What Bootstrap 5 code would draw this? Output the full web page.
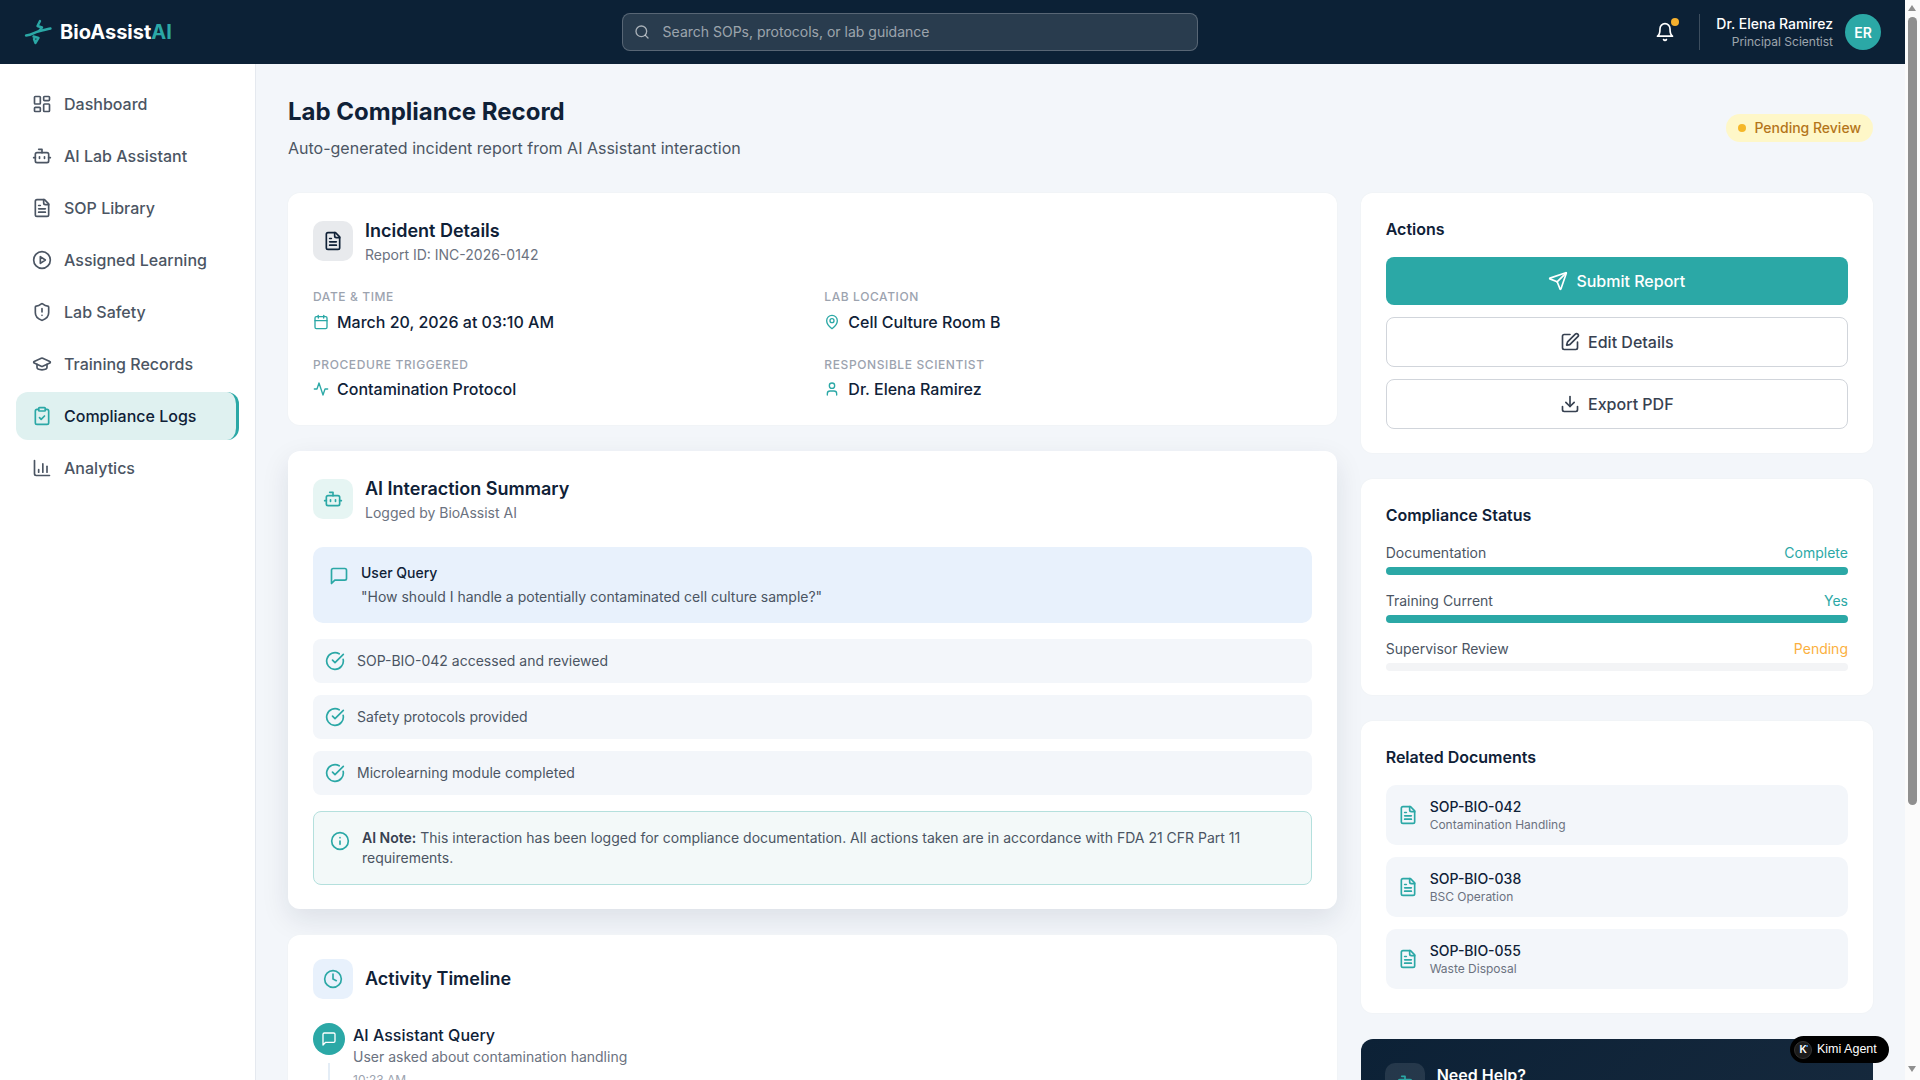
<!DOCTYPE html>
<html lang="en">
<head>
    <meta charset="UTF-8">
    <meta name="viewport" content="width=device-width, initial-scale=1.0">
    <title>BioAssist AI - Lab Compliance Record</title>
    <link href="https://cdn.jsdelivr.net/npm/bootstrap@5.3.0/dist/css/bootstrap.min.css" rel="stylesheet">
    <style>
        body {
            font-family: Inter, "Liberation Sans", sans-serif;
            background: #f3f6fa;
            color: #0f2137;
            padding-right: 15px;
        }
        svg.ic {
            fill: none;
            stroke: currentColor;
            stroke-width: 2;
            stroke-linecap: round;
            stroke-linejoin: round;
            flex-shrink: 0;
        }
        .ic-16 { width: 16px; height: 16px; }
        .ic-20 { width: 20px; height: 20px; }
        .teal { color: #2ba8a6; }

        /* the browser hides its own scrollbar here, so it is drawn */
        .scroll-rail {
            position: fixed;
            top: 0;
            right: 0;
            bottom: 0;
            width: 15px;
            background: #fbfbfb;
            z-index: 1050;
            padding: 5px 3px;
        }
        .scroll-up, .scroll-down {
            width: 0;
            height: 0;
            border-left: 4.5px solid transparent;
            border-right: 4.5px solid transparent;
        }
        .scroll-up { border-bottom: 6px solid #8f8f8f; margin-bottom: 6px; }
        .scroll-down { border-top: 6px solid #8f8f8f; margin-top: auto; margin-bottom: 3px; }
        .scroll-thumb { height: 788px; background: #8f8f8f; border-radius: 5px; }

        .topbar {
            height: 64px;
            background: #0c2136;
            padding: 0 24px;
        }
        .brand { font-size: 20px; font-weight: 700; color: #fff; }
        .brand span { color: #2ba8a6; }
        .search-box {
            width: 576px;
            height: 38px;
            background: rgba(255,255,255,.12);
            border: 1px solid rgba(255,255,255,.22);
            border-radius: 8px;
            padding: 0 11px;
            gap: 13px;
            color: rgba(255,255,255,.6);
        }
        .search-box input {
            background: none;
            border: 0;
            outline: 0;
            padding: 0;
            width: 100%;
            font-size: 14px;
            line-height: 20px;
            color: #fff;
        }
        .search-box input::placeholder { color: rgba(255,255,255,.55); }
        .bell-btn { width: 36px; height: 36px; color: #fff; }
        .bell-dot {
            top: 4px;
            right: 4px;
            width: 8px;
            height: 8px;
            background: #f5b02e;
        }
        .top-divider { width: 1px; height: 36px; background: rgba(255,255,255,.2); }
        .user-name { font-size: 14px; font-weight: 500; color: #fff; line-height: 20px; }
        .user-role { font-size: 12px; color: rgba(255,255,255,.6); line-height: 16px; }
        .avatar {
            width: 36px;
            height: 36px;
            background: #2ba8a6;
            color: #fff;
            font-size: 14px;
            font-weight: 600;
        }

        .sidebar {
            width: 256px;
            height: calc(100vh - 64px);
            top: 64px;
            background: #fff;
            border-right: 1px solid #e5e9ef;
            padding: 16px;
        }
        .sidebar .nav { gap: 4px; }
        .sidebar .nav-link {
            height: 48px;
            padding: 0 16px;
            gap: 12px;
            border-radius: 12px;
            color: #4b5563;
            font-weight: 500;
            font-size: 16px;
        }
        .sidebar .nav-link.active {
            background: #dff1f0;
            color: #0f2137;
            border-right: 3px solid #2ba8a6;
        }
        .sidebar .nav-link.active svg { color: #2ba8a6; }

        .page { padding: 32px; min-width: 0; }
        .page-title { font-size: 24px; line-height: 32px; font-weight: 700; margin: 0 0 8px; }
        .page-sub { font-size: 16px; line-height: 24px; color: #4b5563; margin: 0; }
        .page-head { margin-bottom: 33px; }
        .pending-badge {
            height: 28px;
            padding: 0 12px 1px;
            gap: 8px;
            background: #fef7c8;
            color: #b4751a;
            font-size: 14px;
            font-weight: 500;
        }
        .pending-badge i { width: 8px; height: 8px; border-radius: 50%; background: #f5b728; }

        .stack { display: flex; flex-direction: column; gap: 26px; }
        .panel {
            border-radius: 12px;
            background: #fff;
            padding: 24px 25px;
            box-shadow: 0 0 0 1px #f1f4f7;
        }
        .panel-raised { box-shadow: 0 10px 28px rgba(15,33,55,.1); }
        .panel-dark {
            border-radius: 12px;
            padding: 24px;
            background: linear-gradient(135deg, #0c2136, #16293d);
            color: #fff;
        }
        .icon-box {
            width: 40px;
            height: 40px;
            border-radius: 10px;
            flex-shrink: 0;
        }
        .box-gray { background: #e8eaed; color: #0f2137; }
        .box-teal { background: #e6f5f3; color: #2ba8a6; }
        .box-blue { background: #e8f1fc; color: #2ba8a6; }
        .box-dark { background: rgba(255,255,255,.1); color: #2ba8a6; }
        .card-title-lg { font-size: 18px; line-height: 27px; font-weight: 600; margin: 0; }
        .card-sub { font-size: 14px; line-height: 21px; color: #6b7280; margin: 0; }
        .card-title-sm { font-size: 16px; line-height: 24px; font-weight: 600; margin: 0 0 16px; }
        .timeline-title { padding-bottom: 2px; }

        .detail-grid {
            display: grid;
            grid-template-columns: 1fr 1fr;
            gap: 22px 24px;
            margin-top: 23px;
        }
        .detail-label {
            font-size: 12px;
            line-height: 18px;
            font-weight: 500;
            color: #9ca3af;
            text-transform: uppercase;
            letter-spacing: .05em;
            margin-bottom: 3.5px;
        }
        .detail-value { font-size: 16px; line-height: 24px; font-weight: 500; gap: 8px; }

        .query-box {
            background: #e8f1fc;
            border-radius: 10px;
            padding: 15px 16px 16px;
            gap: 12px;
            margin: 24px 0 16px;
            font-size: 14px;
            line-height: 21px;
        }
        .query-box svg { margin-top: 4px; }
        .query-box b { font-weight: 500; display: block; margin-bottom: 3px; }
        .query-box span { color: #4b5563; }
        .check-list { display: flex; flex-direction: column; gap: 12px; }
        .check-row {
            height: 44px;
            background: #f3f6fa;
            border-radius: 8px;
            padding: 0 12px 2px;
            gap: 12px;
            font-size: 14px;
            color: #4b5563;
        }
        .check-row svg { margin-top: 2px; }
        .note-box {
            background: #f3f9f9;
            border: 1px solid #b4e0dd;
            border-radius: 8px;
            padding: 16px;
            gap: 12px;
            margin-top: 16px;
            font-size: 14px;
            line-height: 20px;
            color: #4b5563;
        }
        .note-box svg { margin-top: 3px; }
        .note-box b { font-weight: 600; color: #374151; }

        .tl-item { gap: 8px; padding-bottom: 24px; position: relative; }
        .tl-item:last-child { padding-bottom: 0; }
        .tl-item:not(:last-child)::before {
            content: "";
            position: absolute;
            left: 15px;
            top: 40px;
            bottom: 0;
            width: 2px;
            background: #e4edf6;
        }
        .tl-dot {
            width: 32px;
            height: 32px;
            background: #2ba8a6;
            color: #fff;
            flex-shrink: 0;
        }
        .tl-title { font-size: 16px; line-height: 24px; font-weight: 500; }
        .tl-sub { font-size: 14px; line-height: 20px; color: #6b7280; }
        .tl-time { font-size: 12px; line-height: 18px; color: #9ca3af; margin-top: 4px; }

        .action-list { display: flex; flex-direction: column; gap: 12px; }
        .action-btn {
            height: 50px;
            border: 1px solid #d1d5db;
            border-radius: 8px;
            background: #fff;
            color: #374151;
            font-size: 16px;
            font-weight: 500;
            gap: 8px;
        }
        .action-primary {
            height: 48px;
            border: 0;
            background: #2ba8a6;
            color: #fff;
        }

        .status-list { display: flex; flex-direction: column; gap: 16px; }
        .status-row { font-size: 14px; line-height: 20px; color: #4b5563; margin-bottom: 4px; }
        .status-pending { color: #fbb040; }
        .progress { height: 8px; background: #f3f4f6; border-radius: 4px; }
        .progress-bar { background: #2ba8a6; }

        .doc-list { display: flex; flex-direction: column; gap: 12px; }
        .doc-row {
            height: 60px;
            background: #f3f6fa;
            border-radius: 10px;
            padding: 0 12px;
            gap: 12px;
        }
        .doc-id { font-size: 14px; line-height: 20px; font-weight: 500; }
        .doc-name { font-size: 12px; line-height: 16px; color: #6b7280; }

        .kimi-pill {
            position: fixed;
            right: 31px;
            bottom: 17px;
            width: 99px;
            height: 27px;
            padding: 0 4px;
            gap: 5px;
            background: #000;
            color: #fff;
            font-family: "Liberation Sans", Arial, sans-serif;
            font-size: 12.5px;
            z-index: 1040;
        }
        .kimi-logo {
            width: 18px;
            height: 18px;
            background: #1c1c1c;
            border: 1px solid #333;
            font-size: 10px;
            font-weight: 700;
        }
        .kimi-logo::after {
            content: "";
            position: absolute;
            top: 3px;
            right: 3px;
            width: 2px;
            height: 2px;
            border-radius: 50%;
            background: #3b9dff;
        }
    </style>
</head>
<body>
    <svg width="0" height="0" class="position-absolute">
        <symbol id="i-dashboard" viewBox="0 0 24 24"><rect x="3" y="3" width="7" height="9" rx="1"/><rect x="14" y="3" width="7" height="5" rx="1"/><rect x="14" y="12" width="7" height="9" rx="1"/><rect x="3" y="16" width="7" height="5" rx="1"/></symbol>
        <symbol id="i-bot" viewBox="0 0 24 24"><path d="M12 8V4H8"/><rect x="4" y="8" width="16" height="12" rx="2"/><path d="M2 14h2"/><path d="M20 14h2"/><path d="M15 13v2"/><path d="M9 13v2"/></symbol>
        <symbol id="i-file" viewBox="0 0 24 24"><path d="M15 2H6a2 2 0 0 0-2 2v16a2 2 0 0 0 2 2h12a2 2 0 0 0 2-2V7Z"/><path d="M14 2v4a2 2 0 0 0 2 2h4"/><path d="M10 9H8"/><path d="M16 13H8"/><path d="M16 17H8"/></symbol>
        <symbol id="i-play" viewBox="0 0 24 24"><circle cx="12" cy="12" r="10"/><polygon points="10 8 16 12 10 16 10 8"/></symbol>
        <symbol id="i-shield" viewBox="0 0 24 24"><path d="M20 13c0 5-3.5 7.5-7.66 8.95a1 1 0 0 1-.67-.01C7.5 20.5 4 18 4 13V6a1 1 0 0 1 1-1c2 0 4.5-1.2 6.24-2.72a1.17 1.17 0 0 1 1.52 0C14.51 3.81 17 5 19 5a1 1 0 0 1 1 1z"/><path d="M12 8v4"/><path d="M12 16h.01"/></symbol>
        <symbol id="i-cap" viewBox="0 0 24 24"><path d="M21.42 10.922a1 1 0 0 0-.019-1.838L12.83 5.18a2 2 0 0 0-1.66 0L2.6 9.08a1 1 0 0 0 0 1.832l8.57 3.908a2 2 0 0 0 1.66 0z"/><path d="M6 12.5V16a6 3 0 0 0 12 0v-3.5"/></symbol>
        <symbol id="i-clipboard" viewBox="0 0 24 24"><rect x="8" y="2" width="8" height="4" rx="1"/><path d="M16 4h2a2 2 0 0 1 2 2v14a2 2 0 0 1-2 2H6a2 2 0 0 1-2-2V6a2 2 0 0 1 2-2h2"/><path d="m9 14 2 2 4-4"/></symbol>
        <symbol id="i-chart" viewBox="0 0 24 24"><path d="M3 3v16a2 2 0 0 0 2 2h16"/><path d="M8 17v-3"/><path d="M13 17V7"/><path d="M18 17V10"/></symbol>
        <symbol id="i-search" viewBox="0 0 24 24"><circle cx="11" cy="11" r="8"/><path d="m21 21-4.3-4.3"/></symbol>
        <symbol id="i-bell" viewBox="0 0 24 24"><path d="M6 8a6 6 0 0 1 12 0c0 7 3 9 3 9H3s3-2 3-9"/><path d="M10.3 21a1.94 1.94 0 0 0 3.4 0"/></symbol>
        <symbol id="i-calendar" viewBox="0 0 24 24"><path d="M8 2v4"/><path d="M16 2v4"/><rect x="3" y="4" width="18" height="18" rx="2"/><path d="M3 10h18"/></symbol>
        <symbol id="i-pin" viewBox="0 0 24 24"><path d="M20 10c0 6-8 12-8 12s-8-6-8-12a8 8 0 0 1 16 0Z"/><circle cx="12" cy="10" r="3"/></symbol>
        <symbol id="i-activity" viewBox="0 0 24 24"><path d="M22 12h-4l-3 9L9 3l-3 9H2"/></symbol>
        <symbol id="i-user" viewBox="0 0 24 24"><path d="M19 21v-2a4 4 0 0 0-4-4H9a4 4 0 0 0-4 4v2"/><circle cx="12" cy="7" r="4"/></symbol>
        <symbol id="i-message" viewBox="0 0 24 24"><path d="M21 15a2 2 0 0 1-2 2H7l-4 4V5a2 2 0 0 1 2-2h14a2 2 0 0 1 2 2z"/></symbol>
        <symbol id="i-check" viewBox="0 0 24 24"><path d="M21.801 10A10 10 0 1 1 17 3.335"/><path d="m9 11 3 3L22 4"/></symbol>
        <symbol id="i-info" viewBox="0 0 24 24"><circle cx="12" cy="12" r="10"/><path d="M12 16v-4"/><path d="M12 8h.01"/></symbol>
        <symbol id="i-clock" viewBox="0 0 24 24"><circle cx="12" cy="12" r="10"/><polyline points="12 6 12 12 16 14"/></symbol>
        <symbol id="i-send" viewBox="0 0 24 24"><path d="M14.536 21.686a.5.5 0 0 0 .937-.024l6.5-19a.496.496 0 0 0-.635-.635l-19 6.5a.5.5 0 0 0-.024.937l7.93 3.18a2 2 0 0 1 1.112 1.11z"/><path d="m21.854 2.147-10.94 10.939"/></symbol>
        <symbol id="i-edit" viewBox="0 0 24 24"><path d="M12 3H5a2 2 0 0 0-2 2v14a2 2 0 0 0 2 2h14a2 2 0 0 0 2-2v-7"/><path d="M18.375 2.625a1 1 0 0 1 3 3l-9.013 9.014a2 2 0 0 1-.853.505l-2.873.84a.5.5 0 0 1-.62-.62l.84-2.873a2 2 0 0 1 .506-.852z"/></symbol>
        <symbol id="i-download" viewBox="0 0 24 24"><path d="M21 15v4a2 2 0 0 1-2 2H5a2 2 0 0 1-2-2v-4"/><polyline points="7 10 12 15 17 10"/><path d="M12 15V3"/></symbol>
    </svg>

    <header class="topbar sticky-top d-flex align-items-center justify-content-between">
        <div class="d-flex align-items-center gap-2">
            <svg width="28" height="26" viewBox="0 0 28 26" fill="none" stroke="#2ba8a6" stroke-linecap="round" stroke-linejoin="round">
                <path d="M2 16.500C8 16 10 13.500 14 12.500S22 10.500 26.500 9.500" stroke-width="2.400"/>
                <path d="M16 2 13.500 7 18 8.500 15 12" stroke-width="2.400"/>
                <path d="M9.500 17.500 14.500 19 11.500 24 10 20" stroke-width="2.400"/>
            </svg>
            <div class="brand">BioAssist<span>AI</span></div>
        </div>
        <div class="search-box d-flex align-items-center">
            <svg class="ic ic-16"><use href="#i-search"/></svg>
            <input type="text" placeholder="Search SOPs, protocols, or lab guidance">
        </div>
        <div class="d-flex align-items-center">
            <div class="bell-btn position-relative d-flex align-items-center justify-content-center">
                <svg class="ic ic-20"><use href="#i-bell"/></svg>
                <span class="bell-dot position-absolute rounded-circle"></span>
            </div>
            <div class="top-divider mx-3"></div>
            <div class="text-end me-2 pe-1">
                <div class="user-name">Dr. Elena Ramirez</div>
                <div class="user-role">Principal Scientist</div>
            </div>
            <div class="avatar rounded-circle d-flex align-items-center justify-content-center">ER</div>
        </div>
    </header>

    <div class="d-flex align-items-start">
        <aside class="sidebar sticky-top flex-shrink-0">
            <nav class="nav flex-column">
                <a class="nav-link d-flex align-items-center" href="#"><svg class="ic ic-20"><use href="#i-dashboard"/></svg>Dashboard</a>
                <a class="nav-link d-flex align-items-center" href="#"><svg class="ic ic-20"><use href="#i-bot"/></svg>AI Lab Assistant</a>
                <a class="nav-link d-flex align-items-center" href="#"><svg class="ic ic-20"><use href="#i-file"/></svg>SOP Library</a>
                <a class="nav-link d-flex align-items-center" href="#"><svg class="ic ic-20"><use href="#i-play"/></svg>Assigned Learning</a>
                <a class="nav-link d-flex align-items-center" href="#"><svg class="ic ic-20"><use href="#i-shield"/></svg>Lab Safety</a>
                <a class="nav-link d-flex align-items-center" href="#"><svg class="ic ic-20"><use href="#i-cap"/></svg>Training Records</a>
                <a class="nav-link active d-flex align-items-center" href="#"><svg class="ic ic-20"><use href="#i-clipboard"/></svg>Compliance Logs</a>
                <a class="nav-link d-flex align-items-center" href="#"><svg class="ic ic-20"><use href="#i-chart"/></svg>Analytics</a>
            </nav>
        </aside>

        <main class="page flex-grow-1">
            <div class="page-head d-flex justify-content-between align-items-center">
                <div>
                    <h1 class="page-title">Lab Compliance Record</h1>
                    <p class="page-sub">Auto-generated incident report from AI Assistant interaction</p>
                </div>
                <div class="pending-badge rounded-pill d-flex align-items-center"><i></i>Pending Review</div>
            </div>

            <div class="row g-4">
                <div class="col-8">
                    <div class="stack">
                        <section class="panel">
                            <div class="d-flex align-items-center gap-2">
                                <div class="icon-box box-gray d-flex align-items-center justify-content-center me-1"><svg class="ic ic-20"><use href="#i-file"/></svg></div>
                                <div>
                                    <h2 class="card-title-lg">Incident Details</h2>
                                    <p class="card-sub">Report ID: INC-2026-0142</p>
                                </div>
                            </div>
                            <div class="detail-grid">
                                <div>
                                    <div class="detail-label">Date &amp; Time</div>
                                    <div class="detail-value d-flex align-items-center"><svg class="ic ic-16 teal"><use href="#i-calendar"/></svg>March 20, 2026 at 03:10 AM</div>
                                </div>
                                <div>
                                    <div class="detail-label">Lab Location</div>
                                    <div class="detail-value d-flex align-items-center"><svg class="ic ic-16 teal"><use href="#i-pin"/></svg>Cell Culture Room B</div>
                                </div>
                                <div>
                                    <div class="detail-label">Procedure Triggered</div>
                                    <div class="detail-value d-flex align-items-center"><svg class="ic ic-16 teal"><use href="#i-activity"/></svg>Contamination Protocol</div>
                                </div>
                                <div>
                                    <div class="detail-label">Responsible Scientist</div>
                                    <div class="detail-value d-flex align-items-center"><svg class="ic ic-16 teal"><use href="#i-user"/></svg>Dr. Elena Ramirez</div>
                                </div>
                            </div>
                        </section>

                        <section class="panel panel-raised">
                            <div class="d-flex align-items-center gap-2">
                                <div class="icon-box box-teal d-flex align-items-center justify-content-center me-1"><svg class="ic ic-20"><use href="#i-bot"/></svg></div>
                                <div>
                                    <h2 class="card-title-lg">AI Interaction Summary</h2>
                                    <p class="card-sub">Logged by BioAssist AI</p>
                                </div>
                            </div>
                            <div class="query-box d-flex">
                                <svg class="ic ic-20 teal"><use href="#i-message"/></svg>
                                <div>
                                    <b>User Query</b>
                                    <span>"How should I handle a potentially contaminated cell culture sample?"</span>
                                </div>
                            </div>
                            <div class="check-list">
                                <div class="check-row d-flex align-items-center"><svg class="ic ic-20 teal"><use href="#i-check"/></svg>SOP-BIO-042 accessed and reviewed</div>
                                <div class="check-row d-flex align-items-center"><svg class="ic ic-20 teal"><use href="#i-check"/></svg>Safety protocols provided</div>
                                <div class="check-row d-flex align-items-center"><svg class="ic ic-20 teal"><use href="#i-check"/></svg>Microlearning module completed</div>
                            </div>
                            <div class="note-box d-flex">
                                <svg class="ic ic-20 teal"><use href="#i-info"/></svg>
                                <div><b>AI Note:</b> This interaction has been logged for compliance documentation. All actions taken are in accordance with FDA 21 CFR Part 11 requirements.</div>
                            </div>
                        </section>

                        <section class="panel">
                            <div class="d-flex align-items-center gap-2 mb-4">
                                <div class="icon-box box-blue d-flex align-items-center justify-content-center me-1"><svg class="ic ic-20"><use href="#i-clock"/></svg></div>
                                <h2 class="card-title-lg timeline-title">Activity Timeline</h2>
                            </div>
                            <div class="tl-item d-flex">
                                <div class="tl-dot rounded-circle d-flex align-items-center justify-content-center"><svg class="ic ic-16"><use href="#i-message"/></svg></div>
                                <div>
                                    <div class="tl-title">AI Assistant Query</div>
                                    <div class="tl-sub">User asked about contamination handling</div>
                                    <div class="tl-time">10:23 AM</div>
                                </div>
                            </div>
                            <div class="tl-item d-flex">
                                <div class="tl-dot rounded-circle d-flex align-items-center justify-content-center"><svg class="ic ic-16"><use href="#i-file"/></svg></div>
                                <div>
                                    <div class="tl-title">SOP Accessed</div>
                                    <div class="tl-sub">SOP-BIO-042 opened and reviewed</div>
                                    <div class="tl-time">10:24 AM</div>
                                </div>
                            </div>
                            <div class="tl-item d-flex">
                                <div class="tl-dot rounded-circle d-flex align-items-center justify-content-center"><svg class="ic ic-16"><use href="#i-play"/></svg></div>
                                <div>
                                    <div class="tl-title">Microlearning Completed</div>
                                    <div class="tl-sub">Contamination response module finished</div>
                                    <div class="tl-time">10:31 AM</div>
                                </div>
                            </div>
                            <div class="tl-item d-flex">
                                <div class="tl-dot rounded-circle d-flex align-items-center justify-content-center"><svg class="ic ic-16"><use href="#i-clipboard"/></svg></div>
                                <div>
                                    <div class="tl-title">Report Generated</div>
                                    <div class="tl-sub">Compliance record created automatically</div>
                                    <div class="tl-time">10:32 AM</div>
                                </div>
                            </div>
                        </section>
                    </div>
                </div>

                <div class="col-4">
                    <div class="stack">
                        <section class="panel">
                            <h3 class="card-title-sm">Actions</h3>
                            <div class="action-list">
                                <button class="btn action-btn action-primary d-flex align-items-center justify-content-center"><svg class="ic ic-20"><use href="#i-send"/></svg>Submit Report</button>
                                <button class="btn action-btn d-flex align-items-center justify-content-center"><svg class="ic ic-20"><use href="#i-edit"/></svg>Edit Details</button>
                                <button class="btn action-btn d-flex align-items-center justify-content-center"><svg class="ic ic-20"><use href="#i-download"/></svg>Export PDF</button>
                            </div>
                        </section>

                        <section class="panel">
                            <h3 class="card-title-sm">Compliance Status</h3>
                            <div class="status-list">
                                <div>
                                    <div class="status-row d-flex justify-content-between"><span>Documentation</span><span class="teal">Complete</span></div>
                                    <div class="progress"><div class="progress-bar" style="width:100%"></div></div>
                                </div>
                                <div>
                                    <div class="status-row d-flex justify-content-between"><span>Training Current</span><span class="teal">Yes</span></div>
                                    <div class="progress"><div class="progress-bar" style="width:100%"></div></div>
                                </div>
                                <div>
                                    <div class="status-row d-flex justify-content-between"><span>Supervisor Review</span><span class="status-pending">Pending</span></div>
                                    <div class="progress"><div class="progress-bar" style="width:0%"></div></div>
                                </div>
                            </div>
                        </section>

                        <section class="panel">
                            <h3 class="card-title-sm">Related Documents</h3>
                            <div class="doc-list">
                                <div class="doc-row d-flex align-items-center">
                                    <svg class="ic ic-20 teal"><use href="#i-file"/></svg>
                                    <div><div class="doc-id">SOP-BIO-042</div><div class="doc-name">Contamination Handling</div></div>
                                </div>
                                <div class="doc-row d-flex align-items-center">
                                    <svg class="ic ic-20 teal"><use href="#i-file"/></svg>
                                    <div><div class="doc-id">SOP-BIO-038</div><div class="doc-name">BSC Operation</div></div>
                                </div>
                                <div class="doc-row d-flex align-items-center">
                                    <svg class="ic ic-20 teal"><use href="#i-file"/></svg>
                                    <div><div class="doc-id">SOP-BIO-055</div><div class="doc-name">Waste Disposal</div></div>
                                </div>
                            </div>
                        </section>

                        <section class="panel-dark">
                            <div class="d-flex gap-2">
                                <div class="icon-box box-dark d-flex align-items-center justify-content-center me-1"><svg class="ic ic-20"><use href="#i-bot"/></svg></div>
                                <div>
                                    <div class="fw-semibold">Need Help?</div>
                                    <div class="small opacity-75">Ask the AI Lab Assistant</div>
                                </div>
                            </div>
                        </section>
                    </div>
                </div>
            </div>
        </main>
    </div>

    <div class="kimi-pill rounded-pill d-flex align-items-center">
        <span class="kimi-logo rounded-circle position-relative d-flex align-items-center justify-content-center">K</span>
        Kimi Agent
    </div>

    <div class="scroll-rail d-flex flex-column" aria-hidden="true">
        <div class="scroll-up"></div>
        <div class="scroll-thumb"></div>
        <div class="scroll-down"></div>
    </div>

    <script src="https://cdn.jsdelivr.net/npm/bootstrap@5.3.0/dist/js/bootstrap.bundle.min.js"></script>
</body>
</html>
